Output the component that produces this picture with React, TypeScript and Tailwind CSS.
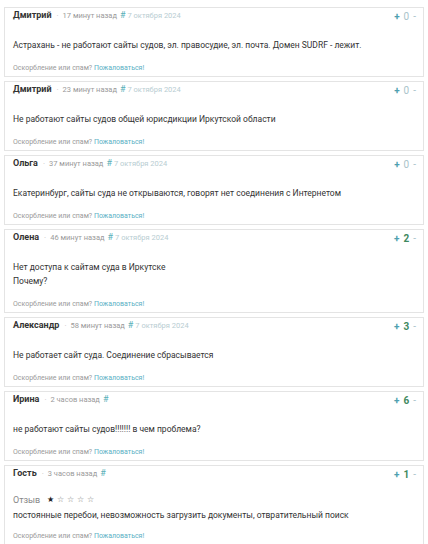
import React from "react";

interface Comment {
  id: number;
  author: string;
  ago: string;
  date?: string;
  text: string[];
  rating: number;
  review?: boolean;
}

const comments: Comment[] = [
  {
    id: 1,
    author: "Дмитрий",
    ago: "17 минут назад",
    date: "7 октября 2024",
    text: ["Астрахань - не работают сайты судов, эл. правосудие, эл. почта. Домен SUDRF - лежит."],
    rating: 0,
  },
  {
    id: 2,
    author: "Дмитрий",
    ago: "23 минут назад",
    date: "7 октября 2024",
    text: ["Не работают сайты судов общей юрисдикции Иркутской области"],
    rating: 0,
  },
  {
    id: 3,
    author: "Ольга",
    ago: "37 минут назад",
    date: "7 октября 2024",
    text: ["Екатеринбург, сайты суда не открываются, говорят нет соединения с Интернетом"],
    rating: 0,
  },
  {
    id: 4,
    author: "Олена",
    ago: "46 минут назад",
    date: "7 октября 2024",
    text: ["Нет доступа к сайтам суда в Иркутске", "Почему?"],
    rating: 2,
  },
  {
    id: 5,
    author: "Александр",
    ago: "58 минут назад",
    date: "7 октября 2024",
    text: ["Не работает сайт суда. Соединение сбрасывается"],
    rating: 3,
  },
  {
    id: 6,
    author: "Ирина",
    ago: "2 часов назад",
    text: ["не работают сайты судов!!!!!!! в чем проблема?"],
    rating: 6,
  },
  {
    id: 7,
    author: "Гость",
    ago: "3 часов назад",
    text: ["постоянные перебои, невозможность загрузить документы, отвратительный поиск"],
    rating: 1,
    review: true,
  },
];

function CommentCard({ c }: { c: Comment }) {
  return (
    <div className="mx-[4px] border border-[#e4e4e4] bg-white">
      {/* header */}
      <div className="flex items-center h-[16px] pl-[8px] pr-[7px]">
        <span className="text-[9px] font-bold text-[#333]">{c.author}</span>
        <span className="ml-[5px] text-[8px] text-[#c4c4c4]">·</span>
        <span className="ml-[4px] text-[7.5px] text-[#9a9a9a]">{c.ago}</span>
        <span className="ml-[3px] text-[9px] text-[#5ab0b8]">#</span>
        {c.date && <span className="ml-[2px] text-[7.5px] text-[#b8cdd2]">{c.date}</span>}
        <div className="ml-auto flex items-center gap-[4px] text-[10px]">
          <span className="text-[#4f9fb0] font-bold">+</span>
          <span className={c.rating > 0 ? "font-bold text-[#3f8a5f]" : "text-[#a9c3ca]"}>{c.rating}</span>
          <span className="text-[#a9c3ca]">-</span>
        </div>
      </div>
      {/* body */}
      <div className="pl-[8px] pr-[8px] pt-[14px] text-[8.5px] leading-[14px] text-[#333]">
        {c.review && (
          <div className="flex items-center gap-[7px] -mt-[3px] mb-[1px]">
            <span className="text-[9px] text-[#888]">Отзыв</span>
            <span className="text-[8px] tracking-[3px]">
              <span className="text-[#222]">★</span>
              <span className="text-[#777]">☆☆☆☆</span>
            </span>
          </div>
        )}
        {c.text.map((t, i) => (
          <div key={i}>{t}</div>
        ))}
      </div>
      <div className={`pl-[8px] ${c.review ? "pt-[9px]" : "pt-[11px]"} pb-[3px] text-[7px] leading-[10px] text-[#9a9a9a]`}>
        Оскорбление или спам? <span className="text-[#5ab0c4]">Пожаловаться!</span>
      </div>
    </div>
  );
}

export default function App() {
  return (
    <div
      className="w-[428px] h-[544px] overflow-hidden bg-white pt-[7px] flex flex-col gap-[4px]"
      style={{ fontFamily: "Roboto, 'Noto Sans', sans-serif" }}
    >
      {comments.map((c) => (
        <CommentCard key={c.id} c={c} />
      ))}
    </div>
  );
}
